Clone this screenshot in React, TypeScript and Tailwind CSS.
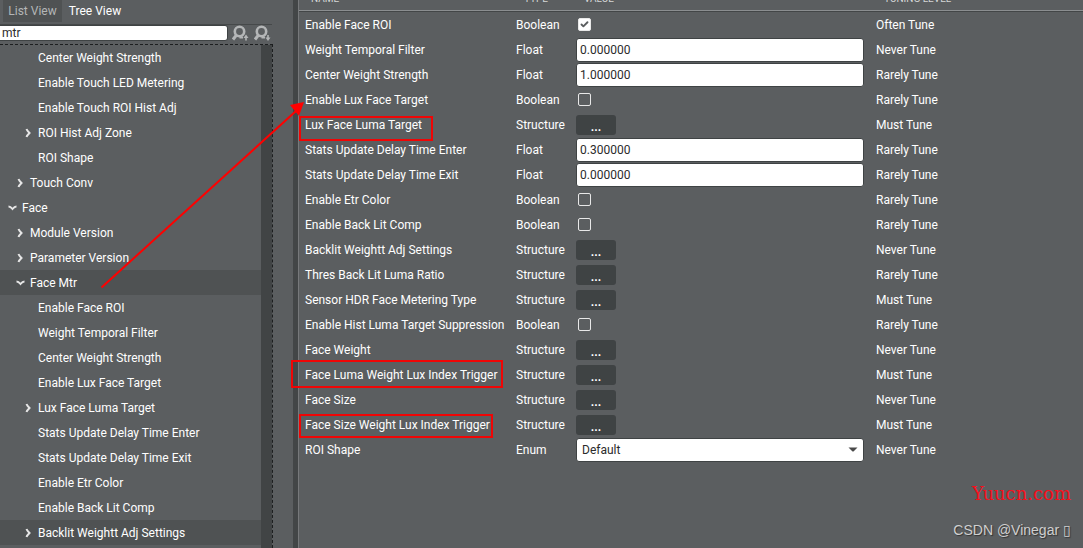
import { Check } from "lucide-react";

type TreeNode = {
  label: string;
  depth: 0 | 1 | 2;
  state?: "open" | "closed";
  active?: boolean;
};

type Param = {
  name: string;
  type: "Boolean" | "Float" | "Structure" | "Enum";
  value?: string;
  checked?: boolean;
  level: string;
  mark?: string;
};

const TREE: TreeNode[] = [
  { label: "Center Weight Strength", depth: 2 },
  { label: "Enable Touch LED Metering", depth: 2 },
  { label: "Enable Touch ROI Hist Adj", depth: 2 },
  { label: "ROI Hist Adj Zone", depth: 2, state: "closed" },
  { label: "ROI Shape", depth: 2 },
  { label: "Touch Conv", depth: 1, state: "closed" },
  { label: "Face", depth: 0, state: "open" },
  { label: "Module Version", depth: 1, state: "closed" },
  { label: "Parameter Version", depth: 1, state: "closed" },
  { label: "Face Mtr", depth: 1, state: "open", active: true },
  { label: "Enable Face ROI", depth: 2 },
  { label: "Weight Temporal Filter", depth: 2 },
  { label: "Center Weight Strength", depth: 2 },
  { label: "Enable Lux Face Target", depth: 2 },
  { label: "Lux Face Luma Target", depth: 2, state: "closed" },
  { label: "Stats Update Delay Time Enter", depth: 2 },
  { label: "Stats Update Delay Time Exit", depth: 2 },
  { label: "Enable Etr Color", depth: 2 },
  { label: "Enable Back Lit Comp", depth: 2 },
  { label: "Backlit Weightt Adj Settings", depth: 2, state: "closed", active: true },
];

const PARAMS: Param[] = [
  { name: "Enable Face ROI", type: "Boolean", checked: true, level: "Often Tune" },
  { name: "Weight Temporal Filter", type: "Float", value: "0.000000", level: "Never Tune" },
  { name: "Center Weight Strength", type: "Float", value: "1.000000", level: "Rarely Tune" },
  { name: "Enable Lux Face Target", type: "Boolean", level: "Rarely Tune" },
  {
    name: "Lux Face Luma Target",
    type: "Structure",
    level: "Must Tune",
    mark: "left-0 top-1 h-[25px] w-[134px]",
  },
  { name: "Stats Update Delay Time Enter", type: "Float", value: "0.300000", level: "Rarely Tune" },
  { name: "Stats Update Delay Time Exit", type: "Float", value: "0.000000", level: "Rarely Tune" },
  { name: "Enable Etr Color", type: "Boolean", level: "Rarely Tune" },
  { name: "Enable Back Lit Comp", type: "Boolean", level: "Rarely Tune" },
  { name: "Backlit Weightt Adj Settings", type: "Structure", level: "Never Tune" },
  { name: "Thres Back Lit Luma Ratio", type: "Structure", level: "Rarely Tune" },
  { name: "Sensor HDR Face Metering Type", type: "Structure", level: "Must Tune" },
  { name: "Enable Hist Luma Target Suppression", type: "Boolean", level: "Rarely Tune" },
  { name: "Face Weight", type: "Structure", level: "Never Tune" },
  {
    name: "Face Luma Weight Lux Index Trigger",
    type: "Structure",
    level: "Must Tune",
    mark: "-left-2 -top-0.5 h-7 w-[212px]",
  },
  { name: "Face Size", type: "Structure", level: "Never Tune" },
  {
    name: "Face Size Weight Lux Index Trigger",
    type: "Structure",
    level: "Must Tune",
    mark: "left-0 top-0.5 h-6 w-[194px]",
  },
  { name: "ROI Shape", type: "Enum", value: "Default", level: "Never Tune" },
];

const INDENT = ["pl-2", "pl-4", "pl-6"];

const Chevron = ({ open }: { open: boolean }) => (
  <svg width="10" height="10" viewBox="0 0 10 10" fill="none" stroke="#e6e6e6" strokeWidth="2">
    <path d={open ? "M0.5 3.5 Q2.5 3.5 4.5 6 Q6.5 3.5 8.5 3.5" : "M2.5 1 Q3 2.5 5.5 5 Q3 7.5 2.5 9"} />
  </svg>
);

const SearchIcon = ({ up }: { up: boolean }) => (
  <svg width="18" height="16" viewBox="0 0 18 16" fill="none" stroke="#b4b6b7">
    <circle cx="7.5" cy="6.5" r="4.7" strokeWidth="2.6" />
    <path d="M4.5 10 L1 14.5" strokeWidth="3" />
    <path d="M7.5 12.5 H11" strokeWidth="2" />
    <path d={up ? "M14 15.5 V11" : "M14 10 V13"} strokeWidth="1.6" />
    <path
      d={up ? "M11.5 13 L14 9.5 L16.5 13 Z" : "M11.5 12.5 L14 16 L16.5 12.5 Z"}
      fill="#b4b6b7"
      stroke="none"
    />
  </svg>
);

const TreeRow = ({ node }: { node: TreeNode }) => (
  <li
    className={`flex h-[25px] items-center gap-1 ${INDENT[node.depth]} ${node.active ? "bg-[#4f5253]" : ""}`}
  >
    <span className="w-[10px] shrink-0">
      {node.state && <Chevron open={node.state === "open"} />}
    </span>
    <span className="whitespace-nowrap">{node.label}</span>
  </li>
);

const ValueCell = ({ param }: { param: Param }) => {
  if (param.type === "Boolean") {
    return (
      <span className="relative ml-[6px] block size-[13px]">
        <input
          type="checkbox"
          aria-label={param.name}
          defaultChecked={param.checked}
          className="block size-[13px] appearance-none rounded-[2px] border border-[#e8e8e8] checked:bg-white"
        />
        {param.checked && (
          <Check size={9} strokeWidth={5} className="pointer-events-none absolute left-0.5 top-0.5 text-[#5b5e60]" />
        )}
      </span>
    );
  }

  if (param.type === "Structure") {
    return (
      <button
        aria-label={param.name}
        className="ml-1 flex h-5 w-10 items-end justify-center rounded-[3px] bg-[#3f4344] font-bold"
      >
        ...
      </button>
    );
  }

  if (param.type === "Enum") {
    return (
      <div className="relative ml-1 mr-2">
        <select
          aria-label={param.name}
          className="block h-6 w-full appearance-none rounded-[3px] border border-[#3f4344] bg-white px-[5px] text-[#2b2b2b]"
        >
          <option>{param.value}</option>
        </select>
        <svg className="pointer-events-none absolute right-[6px] top-2" width="10" height="8" viewBox="0 0 10 8">
          <path d="M0.5 1.5 H9.5 L5.5 5.5 H4.5 Z" fill="#4a4a4a" />
        </svg>
      </div>
    );
  }

  return (
    <div className="ml-1 mr-2">
      <input
        type="text"
        aria-label={param.name}
        defaultValue={param.value}
        className="block h-6 w-full rounded-[3px] border border-[#3f4344] bg-white px-[3px] text-[#2b2b2b]"
      />
    </div>
  );
};

const Sidebar = () => (
  <aside className="flex w-[293px] shrink-0 flex-col">
    <div className="flex h-[25px] w-[272px] items-start border-b border-[#46494a] pl-[3px]">
      <button className="h-[22px] w-[59px] bg-[#4f5253] text-[#b4b6b7]">List View</button>
      <button className="h-[22px] w-[66px]">Tree View</button>
    </div>
    <div className="flex h-[19px] w-[272px] items-start gap-1">
      <input
        type="text"
        aria-label="Search"
        defaultValue="mtr"
        className="h-4 w-[229px] rounded-r-[3px] border border-l-0 border-[#3f4344] bg-white px-0.5 text-[#2b2b2b]"
      />
      <button aria-label="Find previous">
        <SearchIcon up />
      </button>
      <button aria-label="Find next">
        <SearchIcon up={false} />
      </button>
    </div>
    <div className="flex w-[273px] flex-1 border-r border-t border-dashed border-[#1c1e1f]">
      <ul className="flex-1">
        {TREE.map((node, i) => (
          <TreeRow key={i} node={node} />
        ))}
      </ul>
      <div className="w-[11px] bg-[#414445]" />
    </div>
  </aside>
);

const HEADINGS = ["NAME", "TYPE", "VALUE", "TUNING LEVEL", ""];

const ParamTable = () => (
  <main className="min-w-0 flex-1">
    <table className="-mt-3 w-full table-fixed border-separate border-spacing-0">
      <colgroup>
        <col className="w-[213px]" />
        <col className="w-[60px]" />
        <col className="w-[300px]" />
        <col className="w-[75px]" />
        <col />
      </colgroup>
      <thead>
        <tr>
          {HEADINGS.map((h, i) => (
            <th
              key={i}
              className="h-6 border-b border-[#434647] p-0 text-left text-[10px] font-normal text-[#d5d6d7]"
            >
              <div className="flex h-[23px] flex-col justify-between whitespace-nowrap border-b border-[#8b8e90] pl-3 leading-[22px]">
                {h}
              </div>
            </th>
          ))}
        </tr>
      </thead>
      <tbody>
        {PARAMS.map((p) => (
          <tr key={p.name}>
            <td className="h-[25px] whitespace-nowrap p-0">
              <div className="relative flex h-[25px] items-center pl-[6px]">
                {p.name}
                {p.mark && <span className={`absolute z-10 border-2 border-[#f00505] ${p.mark}`} />}
              </div>
            </td>
            <td className="p-0 pl-1">{p.type}</td>
            <td className="p-0">
              <ValueCell param={p} />
            </td>
            <td className="whitespace-nowrap p-0 pl-1" colSpan={2}>
              {p.level}
            </td>
          </tr>
        ))}
      </tbody>
    </table>
  </main>
);

export default function App() {
  return (
    <div className="relative flex h-screen overflow-hidden bg-[#5b5e60] font-[Roboto,sans-serif] text-[12px] leading-4 text-white">
      <Sidebar />
      <div className="w-[6px] shrink-0 border-r border-[#77797b] bg-[#434647]" />
      <ParamTable />

      {/* Arrow from the tree node to its parameters */}
      <svg className="pointer-events-none absolute left-[100px] top-[98px]" width="206" height="192" viewBox="0 0 206 192">
        <path d="M1.5 189.5 L196 13" stroke="#ff0000" strokeWidth="2" />
        <path d="M204 4 L190 7 L199 18 Z" fill="#ff0000" />
      </svg>

      <div className="absolute bottom-2 right-3 flex flex-col items-end gap-4">
        <span className="font-['DejaVu_Serif',serif] text-[18px] leading-5 text-[#f5101c]">
          Yuucn.com
        </span>
        <span className="font-['Liberation_Sans',sans-serif] text-[14px] leading-5 text-[#cfcfcf] [text-shadow:1px_1px_1px_#333]">
          CSDN @Vinegar ▯
        </span>
      </div>
    </div>
  );
}
